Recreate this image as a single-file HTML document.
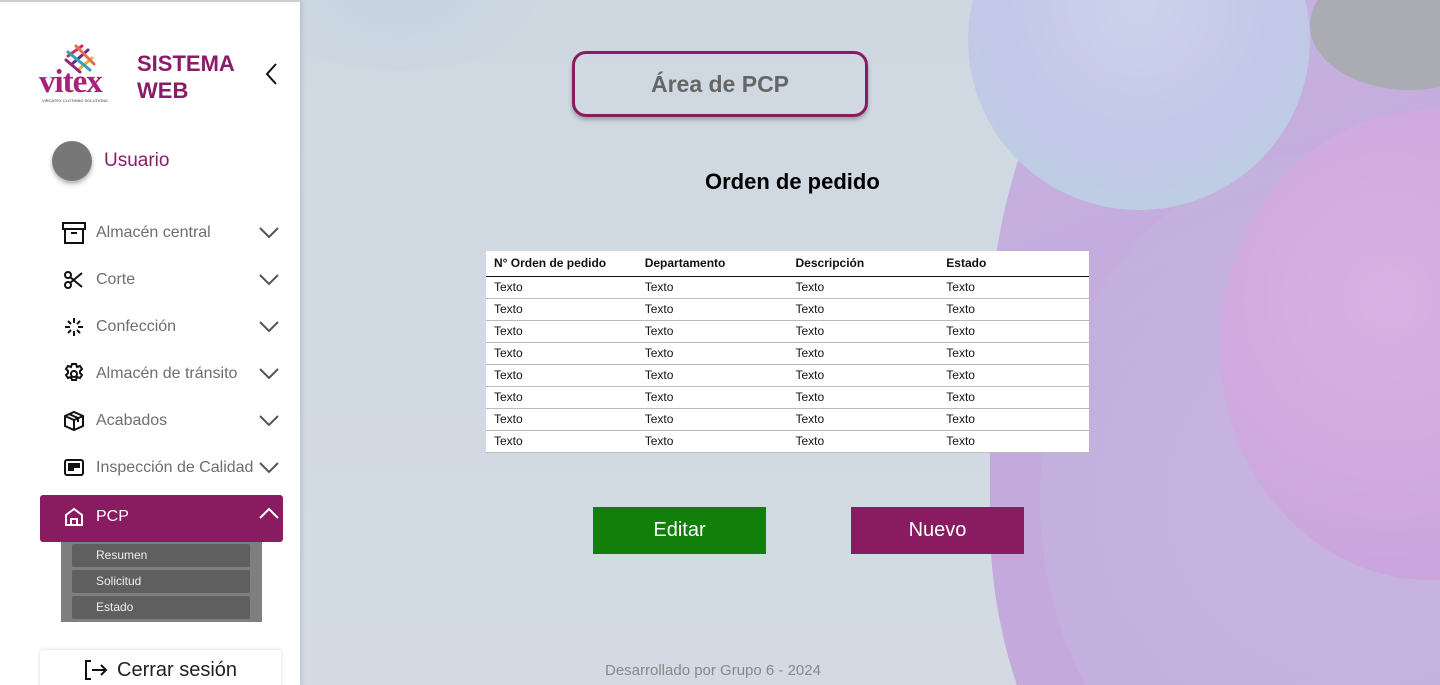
<!DOCTYPE html>
<html><head><meta charset="utf-8"><style>
*{margin:0;padding:0;box-sizing:border-box}
html,body{width:1440px;height:685px;overflow:hidden}
body{font-family:"Liberation Sans",sans-serif;position:relative;background:#d1d9e2}
.bg{position:absolute;left:300px;top:0;width:1140px;height:685px;overflow:hidden;background:linear-gradient(180deg,#cfd8e1 0%,#d3dae3 100%)}
.blob{position:absolute;border-radius:50%}
.side{position:absolute;left:0;top:0;width:300px;height:685px;overflow:hidden;background:#fff;border-top:2px solid #cfcfcf;box-shadow:2px 0 4px rgba(0,0,0,.1)}
.item{position:absolute;left:62px;font-size:16px;color:#6e6e6e;display:flex;align-items:center}
.item svg{margin-right:10px}
.chev{position:absolute;left:259px}
.sub{position:absolute;left:72px;width:178px;height:23px;background:#5f5f5f;color:#eee;font-size:12px;padding:4px 0 0 24px;border-radius:2px}
table{border-collapse:collapse;font-size:12px;color:#111}
td,th{height:22px;text-align:left;padding-left:8px;width:151px;font-weight:normal}
th{font-weight:bold;height:25px;border-bottom:1.5px solid #111}
td{border-bottom:1px solid #bbb}
.btn{position:absolute;top:507px;width:173px;height:47px;color:#fff;font-size:20px;text-align:center;line-height:47px}
</style></head><body>
<div class="bg">
 <div class="blob" style="left:690px;top:-200px;width:1100px;height:1200px;border-radius:45% 0 0 40%;background:linear-gradient(160deg,#c6b8e2 0%,#c4a9dc 40%,#c3aadd 100%)"></div>
 <div class="blob" style="left:740px;top:150px;width:600px;height:700px;background:radial-gradient(circle,#c7b8e0,#c3b0de);opacity:.7"></div>
 <div class="blob" style="left:668px;top:-130px;width:342px;height:340px;background:radial-gradient(circle at 50% 40%,#cdd2ec 0%,#c3c7e8 55%,#b8d3df 95%)"></div>
 <div class="blob" style="left:920px;top:110px;width:420px;height:470px;background:radial-gradient(circle at 40% 40%,#d9b1e3,#cba6de 70%)"></div>
 <div class="blob" style="left:1010px;top:-40px;width:200px;height:130px;background:#ababb3"></div>
 <div class="blob" style="left:-100px;top:-200px;width:400px;height:270px;background:radial-gradient(circle,#b8cde0,#cfd8e1 70%);opacity:.6"></div>
</div>
<div class="side">
 <svg style="position:absolute;left:62px;top:40px" width="36" height="34" viewBox="0 0 36 34">
  <g stroke-width="3" stroke-linecap="round"><line x1="6" y1="14" x2="20" y2="4" stroke="#d4296e"/><line x1="10" y1="22" x2="26" y2="8" stroke="#6d2b8f"/><line x1="16" y1="28" x2="30" y2="16" stroke="#e8b03c"/><line x1="6" y1="10" x2="28" y2="28" stroke="#2aa6b8"/><line x1="14" y1="4" x2="32" y2="22" stroke="#e56c4c"/><line x1="4" y1="18" x2="18" y2="30" stroke="#8e2d7d"/></g>
 </svg>
 <div style="position:absolute;left:39px;top:62px;font-family:'Liberation Serif',serif;font-weight:bold;font-size:33px;color:#a8217a;letter-spacing:-1px">vitex</div>
 <div style="position:absolute;left:42px;top:96px;font-size:4px;color:#333">VIRCATEX CLOTHING SOLUTIONS</div>
 <div style="position:absolute;left:137px;top:48px;font-weight:bold;font-size:22px;line-height:27px;color:#8a1c66">SISTEMA<br>WEB</div>
 <svg style="position:absolute;left:264px;top:60px" width="14" height="24"><path d="M12 2 L3 12 L12 22" fill="none" stroke="#111" stroke-width="2"/></svg>
 <div style="position:absolute;left:52px;top:139px;width:40px;height:40px;border-radius:50%;background:#777;box-shadow:0 3px 5px rgba(0,0,0,.3)"></div>
 <div style="position:absolute;left:104px;top:148px;font-size:19px;color:#8a1c66">Usuario</div>

 <div class="item" style="top:220px"><svg width="24" height="22" viewBox="0 0 24 22" fill="none" stroke="#111" stroke-width="2"><rect x="1" y="1" width="22" height="6"/><rect x="3" y="7" width="18" height="14"/><line x1="9" y1="11" x2="15" y2="11"/></svg>Almacén central</div>
 <div class="item" style="top:267px"><svg width="24" height="22" viewBox="0 0 24 22" fill="none" stroke="#111" stroke-width="2"><circle cx="6" cy="6" r="3"/><circle cx="6" cy="16" r="3"/><path d="M8 8 L20 18 M8 14 L20 4"/></svg>Corte</div>
 <div class="item" style="top:314px"><svg width="24" height="22" viewBox="0 0 24 22" stroke="#111" stroke-width="2"><path d="M12 2v5M12 15v5M3 11h5M16 11h5M6 5l3 3M15 14l3 3M6 17l3-3M15 8l3-3"/></svg>Confección</div>
 <div class="item" style="top:361px"><svg width="24" height="22" viewBox="0 0 24 22" fill="none" stroke="#111" stroke-width="2"><circle cx="12" cy="11" r="3"/><path d="M10 1h4l1 3 3-1 2 3-2 2 0 2 2 2-2 3-3-1-1 3h-4l-1-3-3 1-2-3 2-2 0-2-2-2 2-3 3 1z"/></svg>Almacén de tránsito</div>
 <div class="item" style="top:408px"><svg width="24" height="22" viewBox="0 0 24 22" fill="none" stroke="#111" stroke-width="2"><path d="M3 6l9-4 9 4v10l-9 4-9-4z M3 6l9 4 9-4 M12 10v10 M7 4l9 4v4"/></svg>Acabados</div>
 <div class="item" style="top:455px"><svg width="24" height="22" viewBox="0 0 24 22" fill="none" stroke="#111" stroke-width="2"><rect x="3" y="3" width="18" height="15" rx="2"/><rect x="7" y="7" width="4" height="6" fill="#111"/><rect x="13" y="7" width="4" height="3" fill="#111"/></svg>Inspección de Calidad</div>
 <svg class="chev" style="top:225px" width="20" height="12"><path d="M1 1l9 9 9-9" fill="none" stroke="#555" stroke-width="2"/></svg>
 <svg class="chev" style="top:272px" width="20" height="12"><path d="M1 1l9 9 9-9" fill="none" stroke="#555" stroke-width="2"/></svg>
 <svg class="chev" style="top:319px" width="20" height="12"><path d="M1 1l9 9 9-9" fill="none" stroke="#555" stroke-width="2"/></svg>
 <svg class="chev" style="top:366px" width="20" height="12"><path d="M1 1l9 9 9-9" fill="none" stroke="#555" stroke-width="2"/></svg>
 <svg class="chev" style="top:413px" width="20" height="12"><path d="M1 1l9 9 9-9" fill="none" stroke="#555" stroke-width="2"/></svg>
 <svg class="chev" style="top:460px" width="20" height="12"><path d="M1 1l9 9 9-9" fill="none" stroke="#555" stroke-width="2"/></svg>

 <div style="position:absolute;left:40px;top:493px;width:243px;height:47px;background:#891c60;border-radius:3px"></div>
 <div class="item" style="top:504px;color:#fff"><svg width="24" height="22" viewBox="0 0 24 22" fill="none" stroke="#fff" stroke-width="2"><path d="M4 9l8-6 8 6v10H4z"/><path d="M9 19v-6h6v6"/></svg>PCP</div>
 <svg style="position:absolute;left:259px;top:505px" width="20" height="12"><path d="M1 11l9-9 9 9" fill="none" stroke="#fff" stroke-width="2"/></svg>
 <div style="position:absolute;left:61px;top:540px;width:201px;height:80px;background:#7f7f7f"></div>
 <div class="sub" style="top:542px">Resumen</div>
 <div class="sub" style="top:568px">Solicitud</div>
 <div class="sub" style="top:594px">Estado</div>
 <div style="position:absolute;left:40px;top:648px;width:241px;height:45px;background:#fff;box-shadow:0 0 4px rgba(0,0,0,.15);border-radius:3px"></div>
 <svg style="position:absolute;left:84px;top:658px" width="24" height="20" viewBox="0 0 24 20" fill="none" stroke="#111" stroke-width="2"><path d="M7 1H2v18h5M8 10h14M17 5l5 5-5 5"/></svg>
 <div style="position:absolute;left:117px;top:657px;font-size:20px;color:#222">Cerrar sesión</div>
</div>

<div style="position:absolute;left:572px;top:51px;width:296px;height:66px;border:3px solid #891c60;border-radius:14px;box-shadow:0 3px 4px rgba(0,0,0,.25);text-align:center;line-height:60px;font-weight:bold;font-size:23px;color:#666">Área de PCP</div>
<div style="position:absolute;left:705px;top:169px;font-weight:bold;font-size:22px;color:#000">Orden de pedido</div>
<table style="position:absolute;left:486px;top:251px;width:603px;background:#fff">
<tr><th>N° Orden de pedido</th><th>Departamento</th><th>Descripción</th><th>Estado</th></tr>
<tr><td>Texto</td><td>Texto</td><td>Texto</td><td>Texto</td></tr>
<tr><td>Texto</td><td>Texto</td><td>Texto</td><td>Texto</td></tr>
<tr><td>Texto</td><td>Texto</td><td>Texto</td><td>Texto</td></tr>
<tr><td>Texto</td><td>Texto</td><td>Texto</td><td>Texto</td></tr>
<tr><td>Texto</td><td>Texto</td><td>Texto</td><td>Texto</td></tr>
<tr><td>Texto</td><td>Texto</td><td>Texto</td><td>Texto</td></tr>
<tr><td>Texto</td><td>Texto</td><td>Texto</td><td>Texto</td></tr>
<tr><td>Texto</td><td>Texto</td><td>Texto</td><td>Texto</td></tr>
</table>
<div class="btn" style="left:593px;background:#137f0b">Editar</div>
<div class="btn" style="left:851px;background:#891c60">Nuevo</div>
<div style="position:absolute;left:605px;top:662px;font-size:15px;color:#888">Desarrollado por Grupo 6 - 2024</div>
</body></html>
